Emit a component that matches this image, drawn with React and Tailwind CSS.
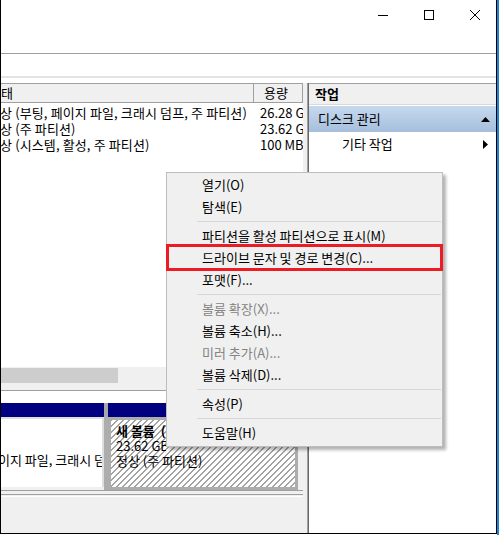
import React from 'react'

const font = "font-['Noto_Sans_CJK_KR','Noto_Sans',sans-serif]"

const volumes = [
  { status: '정상 (부팅, 페이지 파일, 크래시 덤프, 주 파티션)', size: '26.28 GB' },
  { status: '정상 (주 파티션)', size: '23.62 GB' },
  { status: '정상 (시스템, 활성, 주 파티션)', size: '100 MB' },
]

const menu = [
  { label: '열기(O)' },
  { label: '탐색(E)' },
  { sep: true },
  { label: '파티션을 활성 파티션으로 표시(M)' },
  { label: '드라이브 문자 및 경로 변경(C)...' },
  { label: '포맷(F)...' },
  { sep: true },
  { label: '볼륨 확장(X)...', disabled: true },
  { label: '볼륨 축소(H)...' },
  { label: '미러 추가(A)...', disabled: true },
  { label: '볼륨 삭제(D)...' },
  { sep: true },
  { label: '속성(P)' },
  { sep: true },
  { label: '도움말(H)' },
]

function TitleBar() {
  return (
    <div className="flex h-[30px] justify-end">
      <div className="flex w-[46px] items-center justify-center">
        <svg width="10" height="10" viewBox="0 0 10 10">
          <path d="M0 5.5h10" stroke="#000" strokeWidth="1" />
        </svg>
      </div>
      <div className="flex w-[46px] items-center justify-center">
        <svg width="10" height="10" viewBox="0 0 10 10">
          <rect x="0.5" y="0.5" width="9" height="9" fill="none" stroke="#000" strokeWidth="1" />
        </svg>
      </div>
      <div className="flex w-[44px] items-center pl-[18px]">
        <svg width="10" height="10" viewBox="0 0 10 10">
          <path d="M0 0L10 10M10 0L0 10" stroke="#000" strokeWidth="1" />
        </svg>
      </div>
    </div>
  )
}

function VolumeList() {
  return (
    <div className="flex w-[302px] flex-col border-t border-[#a0a0a0]">
      {/* column header */}
      <div className="flex h-[19px] border-b border-[#a0a0a0] bg-[#f0f0f0]">
        <div className="flex flex-1 items-center overflow-hidden whitespace-nowrap">
          <span className="ml-[-12px]">상태</span>
        </div>
        <div className="flex w-[50px] items-center border-x border-[#a0a0a0] pl-[10px]">용량</div>
      </div>

      <div className="h-[264px] bg-white pt-[2px]">
        {volumes.map((v, i) => (
          <div key={i} className="flex h-[16px] items-center whitespace-nowrap">
            <div className="flex-1 overflow-hidden">
              <span className="ml-[-13px] block tracking-[0.12px]">{v.status}</span>
            </div>
            <div className="w-[50px] overflow-hidden pl-[7px]">{v.size}</div>
          </div>
        ))}
      </div>

      {/* horizontal scrollbar */}
      <div className="h-[17px] bg-[#f0f0f0] py-[1px]">
        <div className="h-full w-[117px] bg-[#cdcdcd]" />
      </div>
      <div className="h-[6px] bg-[#f0f0f0]" />
      <div className="h-px bg-[#a0a0a0]" />

      {/* graphical disk view */}
      <div className="h-[12px] bg-white" />
      <div className="flex h-[87px] bg-[#f0f0f0]">
        <div className="flex w-[103px] flex-col">
          <div className="h-[14px] bg-[#000080]" />
          <div className="h-[70px] overflow-hidden whitespace-nowrap border-r-2 border-t-2 border-[#dedede] bg-white pt-[33px] leading-[15px]">
            <span className="ml-[-3px] block">이지 파일, 크래시 덤프, 주 파티션)</span>
          </div>
        </div>
        <div className="flex w-[194px] flex-col">
          <div className="flex h-[14px]">
            <div className="w-[4px] bg-[#a8a8a8]" />
            <div className="flex-1 bg-[#000080]" />
          </div>
          <div className="flex-1 whitespace-nowrap border-[3px] border-l-[7px] border-[#adadad] bg-[repeating-linear-gradient(135deg,#a3a3a3_0_1px,#fff_1px_4.24px)] pl-[5px] pt-[3px] leading-[15px]">
            <div className="w-[50px] overflow-hidden font-bold">새 볼륨&nbsp;&nbsp;(D:)</div>
            <div className="w-[50px] overflow-hidden">23.62 GB NTFS</div>
            <div>정상 (주 파티션)</div>
          </div>
        </div>
        <div className="flex-1" />
      </div>
      <div className="h-px bg-[#a0a0a0]" />
      <div className="h-[3px] bg-[#f0f0f0]" />
      <div className="h-px bg-[#a0a0a0]" />
      <div className="h-px bg-[#f0f0f0]" />
      <div className="h-px bg-white" />
      <div className="flex-1 bg-[#f0f0f0]" />
    </div>
  )
}

function ActionPane() {
  return (
    <div className="flex w-[189px]">
      <div className="w-px bg-[#a0a0a0]" />
      <div className="w-px bg-[#6a6a6a]" />
      <div className="flex flex-1 flex-col border-t border-[#a0a0a0] bg-white">
        <div className="flex h-[21px] items-center border-b border-[#dadada] bg-[#f0f0f0] pl-[6px] font-bold">
          작업
        </div>
        <div className="h-px" />
        <div className="flex h-[26px] items-center justify-between bg-gradient-to-b from-[#c6d9ee] to-[#a6bfdd] pl-[9px] pr-[6px]">
          <span>디스크 관리</span>
          <svg width="9" height="5" viewBox="0 0 9 5">
            <path d="M0 5L4.5 0L9 5Z" fill="#000" />
          </svg>
        </div>
        <div className="flex h-[24px] items-center justify-between pl-[33px] pr-[8px]">
          <span>기타 작업</span>
          <svg width="5" height="9" viewBox="0 0 5 9">
            <path d="M0 0L5 4.5L0 9Z" fill="#000" />
          </svg>
        </div>
      </div>
    </div>
  )
}

function ContextMenu() {
  return (
    <div className="absolute left-[166px] top-[172px] w-[277px] border border-[#bdbdbd] bg-[#f0f0f0] pb-[2px] pt-px shadow-[3px_3px_3px_rgba(0,0,0,0.3)]">
      {menu.map((m, i) =>
        m.sep ? (
          <div key={i} className="flex h-[7px] items-center pl-[30px] pr-[1px]">
            <div className="h-px w-full bg-[#d7d7d7]" />
          </div>
        ) : (
          <div
            key={i}
            className={`flex h-[22px] items-center whitespace-nowrap pl-[35px] ${m.disabled ? 'text-[#838383]' : 'text-black'}`}
          >
            {m.label}
          </div>
        )
      )}
    </div>
  )
}

export default function App() {
  return (
    <div className={`relative flex h-[535px] w-[499px] overflow-hidden bg-white text-[13px] text-black ${font}`}>
      <div className="flex h-[534px]">
        <div className="w-px bg-black" />
        <div className="flex w-[495px] flex-col border-b border-black">
          <TitleBar />
          <div className="h-[24px] border-b border-[#a0a0a0]" />
          <div className="h-[22px]" />
          <div className="h-[2px] bg-[#e3e3e3]" />
          <div className="h-[5px]" />
          <div className="flex min-h-0 flex-1">
            <VolumeList />
            <div className="w-[4px] bg-[#f0f0f0]" />
            <ActionPane />
          </div>
        </div>
        <div className="w-px bg-black" />
      </div>
      <div className="w-[2px] bg-[#1883d7]" />

      <ContextMenu />
      <div className="absolute left-[166px] top-[244px] h-[27px] w-[277px] border-[3px] border-[#ed1c24]" />
    </div>
  )
}
